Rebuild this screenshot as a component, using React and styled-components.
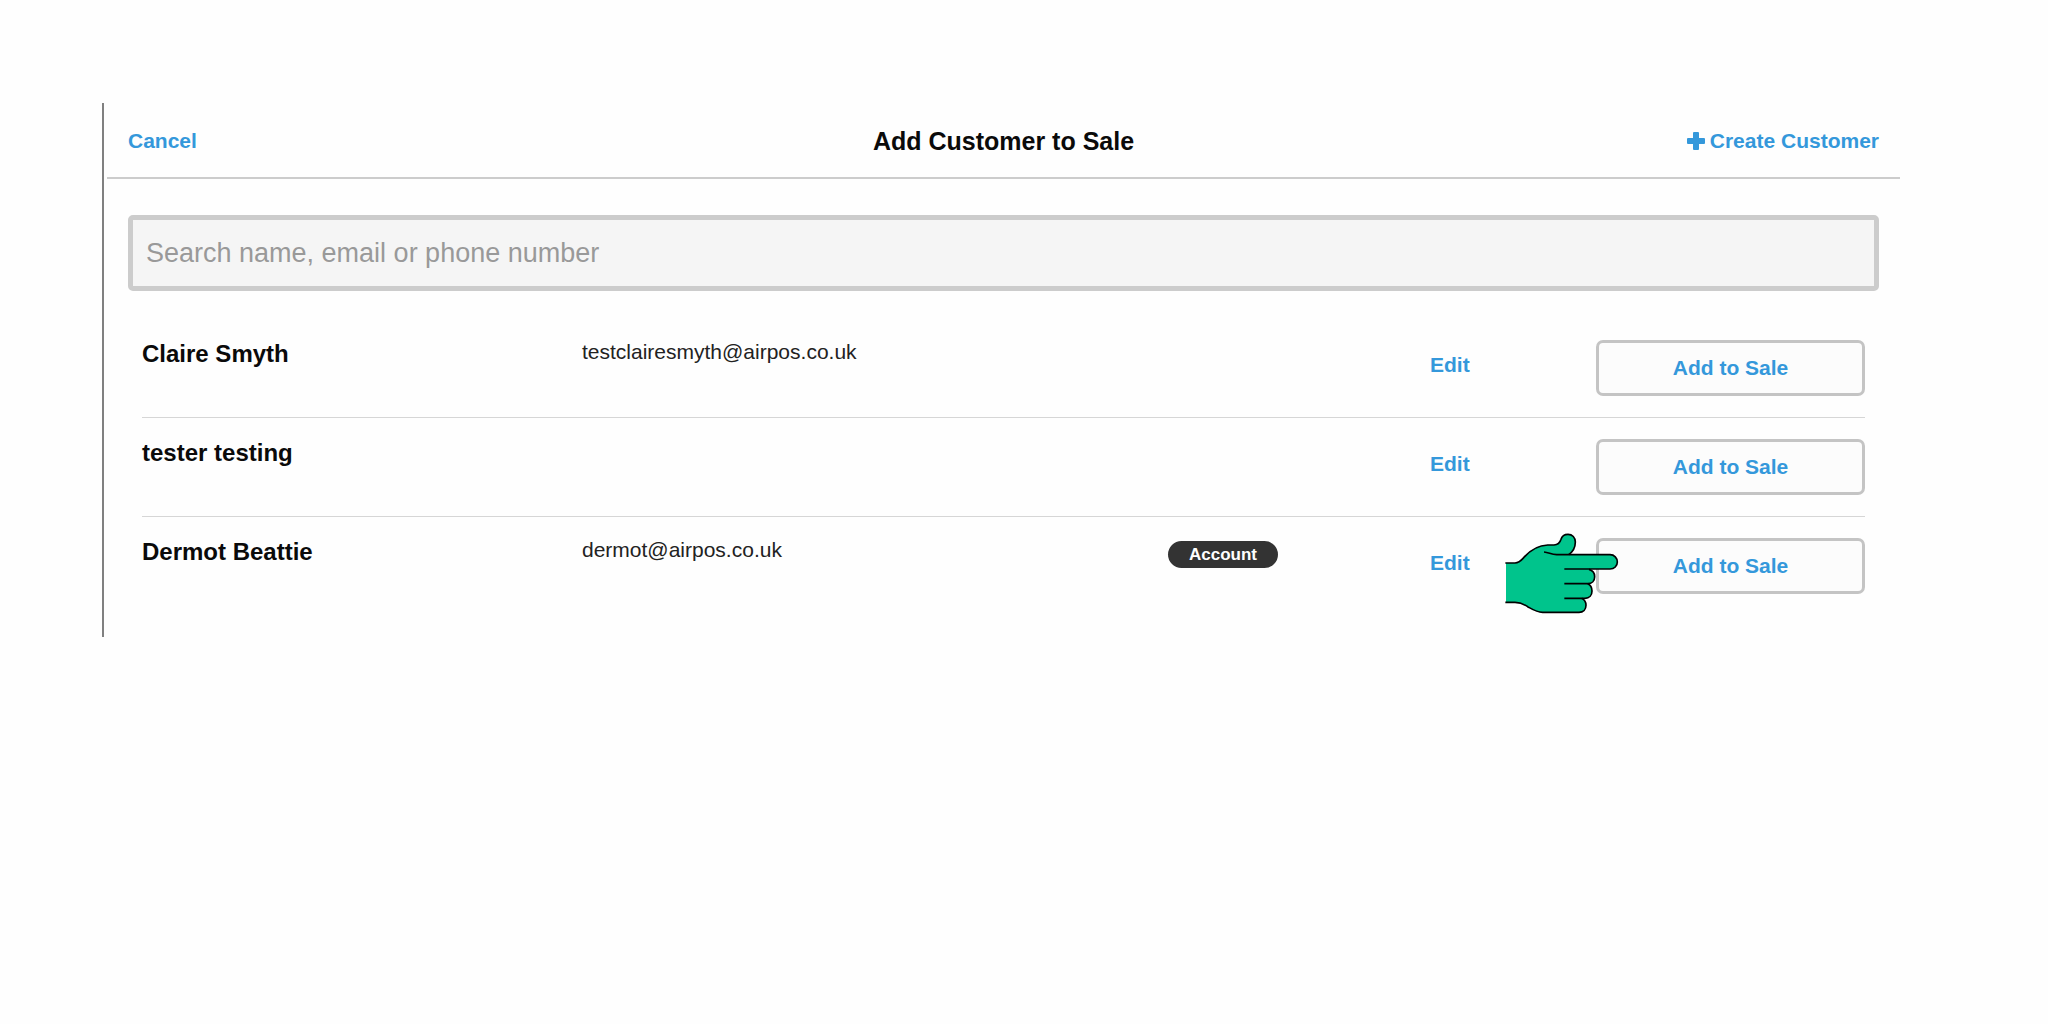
import React from "react";
import styled, { createGlobalStyle } from "styled-components";

const GlobalStyle = createGlobalStyle`
  * {
    box-sizing: border-box;
  }

  body {
    margin: 0;
    background: #fefefe;
    color: #0a0a0a;
    font-family: "Liberation Sans", Arial, sans-serif;
  }
`;

const Page = styled.main`
  padding: 103px 148px 0 102px;
`;

const Panel = styled.section`
  border-left: 2px solid #808080;
  padding: 0 0 22px 3px;
`;

const Header = styled.header`
  display: grid;
  grid-template-columns: 1fr auto 1fr;
  align-items: center;
  height: 76px;
  padding: 2px 21px 0;
  border-bottom: 2px solid #ccc;
`;

const Title = styled.h1`
  margin: 0;
  font-size: 25px;
  line-height: 30px;
  font-weight: bold;
`;

const TextButton = styled.button`
  display: flex;
  align-items: center;
  gap: 5px;
  justify-self: ${(props) => props.$side || "start"};
  padding: 0;
  border: 0;
  background: none;
  color: #3498db;
  font-family: inherit;
  font-size: 21px;
  font-weight: bold;
  line-height: ${(props) => (props.$tall ? "50px" : "26px")};
  cursor: pointer;
`;

const PlusIcon = styled.svg`
  width: 18px;
  height: 18px;
  fill: currentColor;
`;

const Body = styled.div`
  padding: 36px 21px 0;
`;

const SearchInput = styled.input`
  display: block;
  width: 100%;
  height: 76px;
  padding: 0 13px;
  border: 5px solid #ccc;
  border-radius: 5px;
  background: #f5f5f5;
  color: #0a0a0a;
  font-family: inherit;
  font-size: 27px;

  &::placeholder {
    color: #999;
    opacity: 1;
  }
`;

const CustomerList = styled.ul`
  margin: 28px 14px 0;
  padding: 0;
  list-style: none;
`;

const CustomerRow = styled.li`
  display: grid;
  grid-template-columns: 440fr 586fr 262fr 166fr 269fr;
  align-items: start;
  padding: 21px 0;
  border-bottom: 1px solid #d6d6d6;

  &:last-child {
    border-bottom: 0;
  }
`;

const Name = styled.div`
  font-size: 24px;
  font-weight: bold;
  line-height: 28px;
`;

const Email = styled.div`
  font-size: 21px;
  line-height: 24px;
  color: #222;
`;

const Badge = styled.span`
  display: inline-block;
  margin-top: 3px;
  padding: 0 21px;
  border-radius: 14px;
  background: #333;
  color: #fefefe;
  font-size: 17px;
  font-weight: bold;
  line-height: 27px;
`;

const AddCell = styled.div`
  position: relative;
`;

const AddButton = styled.button`
  width: 100%;
  height: 56px;
  border: 3px solid #c4c4c4;
  border-radius: 7px;
  background: #fcfcfc;
  color: #3498db;
  font-family: inherit;
  font-size: 21px;
  font-weight: bold;
  cursor: pointer;
`;

// sits over the left edge of the button it points at
const Hand = styled.svg`
  position: absolute;
  top: -6px;
  left: -92px;
  width: 116px;
  height: 84px;
  pointer-events: none;
`;

const customers = [
  { name: "Claire Smyth", email: "testclairesmyth@airpos.co.uk" },
  { name: "tester testing", email: "" },
  { name: "Dermot Beattie", email: "dermot@airpos.co.uk", account: true, pointed: true },
];

function PointingHand() {
  return (
    <Hand viewBox="27 36 348 252" aria-hidden="true">
      <path
        fill="#00c48c"
        d="M33 129H60C72 129 78 122 86 113C106 90 130 76 158 75H177C190 75 195 68 198 58C201 47 209 43 219 43C232 43 241 53 241 66C241 82 234 95 221 104H345C358 104 367 114 367 126C367 138 358 147 345 147H282C293 150 299 159 299 170C299 182 291 191 278 191C287 195 291 203 291 213C291 226 283 235 270 235H260C268 239 273 247 273 256C273 268 265 277 252 277H143C125 277 112 268 98 260C86 252 75 247 60 247H33Z"
      />
      <g fill="none" stroke="#000" strokeWidth="5" strokeLinejoin="round">
        <path d="M31 129H60C72 129 78 122 86 113C106 90 130 76 158 75H177C190 75 195 68 198 58C201 47 209 43 219 43C232 43 241 53 241 66C241 82 234 95 221 104" />
        <path d="M147 96C162 97 168 104 185 104H345C358 104 367 114 367 126C367 138 358 147 345 147H208" />
        <path d="M282 148C293 151 299 159 299 170C299 182 291 191 278 191H208" />
        <path d="M278 191C287 195 291 203 291 213C291 226 283 235 270 235H208" />
        <path d="M260 235C268 239 273 247 273 256C273 268 265 277 252 277H143C125 277 112 268 98 260C86 252 75 247 60 247H31" />
      </g>
    </Hand>
  );
}

function Customer({ customer }) {
  return (
    <CustomerRow>
      <Name>{customer.name}</Name>
      <Email>{customer.email}</Email>
      <div>{customer.account && <Badge>Account</Badge>}</div>
      <TextButton type="button" $tall>
        Edit
      </TextButton>
      <AddCell>
        <AddButton type="button">Add to Sale</AddButton>
        {customer.pointed && <PointingHand />}
      </AddCell>
    </CustomerRow>
  );
}

export default function App() {
  return (
    <Page>
      <GlobalStyle />
      <Panel>
        <Header>
          <TextButton type="button">Cancel</TextButton>
          <Title>Add Customer to Sale</Title>
          <TextButton type="button" $side="end">
            <PlusIcon viewBox="0 0 18 18" aria-hidden="true">
              <rect x="0" y="6" width="18" height="6" rx="1" />
              <rect x="6" y="0" width="6" height="18" rx="1" />
            </PlusIcon>
            Create Customer
          </TextButton>
        </Header>
        <Body>
          <SearchInput
            type="search"
            aria-label="Search customers"
            placeholder="Search name, email or phone number"
          />
          <CustomerList>
            {customers.map((customer) => (
              <Customer key={customer.name} customer={customer} />
            ))}
          </CustomerList>
        </Body>
      </Panel>
    </Page>
  );
}
